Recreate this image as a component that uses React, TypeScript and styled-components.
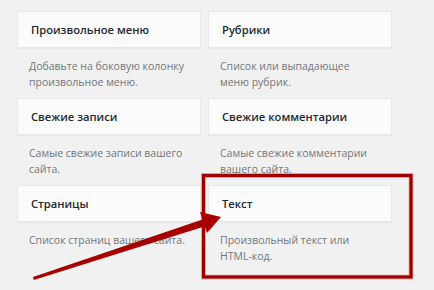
import React from "react";
import styled, { createGlobalStyle } from "styled-components";

const GlobalStyle = createGlobalStyle`
  html, body {
    margin: 0;
    padding: 0;
    background: #f1f1f1;
  }
  body {
    font-family: "Open Sans", "Noto Sans", sans-serif;
  }
`;

const widgets = [
  { title: "Произвольное меню", desc: "Добавьте на боковую колонку произвольное меню." },
  { title: "Рубрики", desc: "Список или выпадающее меню рубрик." },
  { title: "Свежие записи", desc: "Самые свежие записи вашего сайта." },
  { title: "Свежие комментарии", desc: "Самые свежие комментарии вашего сайта." },
  { title: "Страницы", desc: "Список страниц вашего сайта." },
  { title: "Текст", desc: "Произвольный текст или HTML-код." },
];

const Page = styled.div`
  position: relative;
  width: 434px;
  height: 290px;
  overflow: hidden;
  box-sizing: border-box;
  padding: 11px 0 0 17px;
`;

const Grid = styled.div`
  display: grid;
  grid-template-columns: 184px 184px;
  column-gap: 7px;
`;

const Widget = styled.div`
  display: flex;
  flex-direction: column;
`;

const Card = styled.div`
  height: 37px;
  box-sizing: border-box;
  display: flex;
  align-items: center;
  padding: 0 13px;
  background: #fbfbfb;
  border: 1px solid #e8e8e8;
  box-shadow: 0 1px 1px rgba(0, 0, 0, 0.04);
`;

const Title = styled.h3`
  margin: 0;
  font-size: 11.2px;
  font-weight: 600;
  color: #23282d;
`;

const Desc = styled.p`
  margin: 10px 0 8px;
  padding: 0 12px;
  font-size: 10.5px;
  line-height: 16px;
  color: #72777c;
  min-height: 32px;
`;

const Overlay = styled.svg`
  position: absolute;
  left: 0;
  top: 0;
  pointer-events: none;
`;

export default function App() {
  return (
    <>
      <GlobalStyle />
      <Page>
        <Grid>
          {widgets.map((w) => (
            <Widget key={w.title}>
              <Card>
                <Title>{w.title}</Title>
              </Card>
              <Desc>{w.desc}</Desc>
            </Widget>
          ))}
        </Grid>
        <Overlay width="434" height="290" viewBox="0 0 434 290">
          <rect x="203.5" y="175.5" width="207.5" height="101.5" fill="none" stroke="#e8b4b4" strokeWidth="5" />
          <rect x="203.5" y="175.5" width="207.5" height="101.5" fill="none" stroke="#a00000" strokeWidth="3.2" />
          <polygon points="33,277 33.8,280 206,226 204,219" fill="#a80000" />
          <polygon points="221,217 200,212 207,233" fill="#a80000" />
        </Overlay>
      </Page>
    </>
  );
}
